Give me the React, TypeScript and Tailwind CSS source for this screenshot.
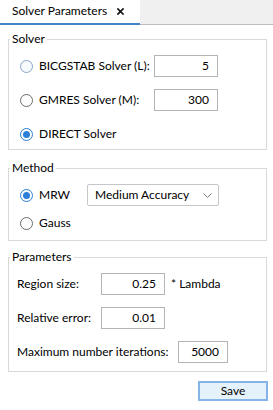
import React from "react";

function Radio({ state }: { state: "off" | "hover" | "on" }) {
  if (state === "on") {
    return (
      <span className="flex h-[13px] w-[13px] shrink-0 items-center justify-center rounded-full border border-[#2b7fd6] bg-white">
        <span className="h-[7px] w-[7px] rounded-full bg-[#2b7fd6]" />
      </span>
    );
  }
  if (state === "hover") {
    return <span className="h-[13px] w-[13px] shrink-0 rounded-full border border-[#8aa5c6] bg-[#f7fafd]" />;
  }
  return <span className="h-[13px] w-[13px] shrink-0 rounded-full border border-[#6b6b6b] bg-white" />;
}

function NumBox({ value, w }: { value: string; w: string }) {
  return (
    <div className={`flex h-[22px] shrink-0 items-center justify-end border border-[#b4b4b4] bg-white pr-[8px] ${w}`}>
      {value}
    </div>
  );
}

function Group({ title, children, className }: { title: string; children: React.ReactNode; className?: string }) {
  return (
    <fieldset className={`ml-[8px] w-[259px] border border-[#d9d9d9] p-0 ${className ?? ""}`}>
      <legend className="ml-[1px] px-[2px] leading-[16px]">{title}</legend>
      {children}
    </fieldset>
  );
}

export default function App() {
  return (
    <div
      className="h-[410px] w-[273px] whitespace-nowrap bg-white text-[12px] leading-[16px] text-black"
      style={{ fontFamily: 'Lato, "Noto Sans", sans-serif' }}
    >
      {/* Tab bar */}
      <div className="flex h-[25px]">
        <div className="flex h-[25px] w-[140px] items-center border-b-2 border-[#3f86cf] bg-white pb-[1px] pl-[12px]">
          <span className="w-[105px]">Solver Parameters</span>
          <svg width="7" height="7" viewBox="0 0 7 7">
            <path d="M1 1L6 6M6 1L1 6" stroke="#111" strokeWidth="1.7" strokeLinecap="square" />
          </svg>
        </div>
        <div className="h-[25px] flex-1 border-b border-[#bcbcbc] bg-[#f0f0f0]" />
      </div>

      <Group title="Solver" className="mt-[6px]">
        <div className="flex flex-col gap-[12px] pb-[4px] pl-[11px] pt-[8px]">
          <div className="flex h-[22px] items-center">
            <div className="flex w-[134px] items-center gap-[6px]">
              <Radio state="hover" />
              <span>BICGSTAB Solver (L):</span>
            </div>
            <NumBox value="5" w="w-[64px]" />
          </div>
          <div className="flex h-[22px] items-center">
            <div className="flex w-[134px] items-center gap-[6px]">
              <Radio state="off" />
              <span>GMRES Solver (M):</span>
            </div>
            <NumBox value="300" w="w-[64px]" />
          </div>
          <div className="flex h-[22px] items-center gap-[6px]">
            <Radio state="on" />
            <span>DIRECT Solver</span>
          </div>
        </div>
      </Group>

      <Group title="Method" className="mt-[10px]">
        <div className="flex flex-col gap-[6px] pb-[6px] pl-[11px] pt-[8px]">
          <div className="flex h-[22px] items-center">
            <div className="flex w-[67px] items-center gap-[6px]">
              <Radio state="on" />
              <span>MRW</span>
            </div>
            <div className="flex h-[22px] w-[132px] items-center justify-between rounded-[2px] border border-[#c6c6c6] bg-white pl-[7px] pr-[6px]">
              <span>Medium Accuracy</span>
              <svg width="9" height="5" viewBox="0 0 9 5">
                <path d="M0.5 0.5L4.5 4.5L8.5 0.5" fill="none" stroke="#777" strokeWidth="1" />
              </svg>
            </div>
          </div>
          <div className="flex h-[22px] items-center gap-[6px]">
            <Radio state="off" />
            <span>Gauss</span>
          </div>
        </div>
      </Group>

      <Group title="Parameters" className="mt-[8px]">
        <div className="flex flex-col gap-[12px] pb-[8px] pl-[8px] pt-[8px]">
          <div className="flex h-[22px] items-center">
            <span className="w-[84px]">Region size:</span>
            <NumBox value="0.25" w="w-[64px]" />
            <span className="ml-[6px]">* Lambda</span>
          </div>
          <div className="flex h-[22px] items-center">
            <span className="w-[84px]">Relative error:</span>
            <NumBox value="0.01" w="w-[64px]" />
          </div>
          <div className="flex h-[22px] items-center">
            <span className="w-[161px]">Maximum number iterations:</span>
            <NumBox value="5000" w="w-[50px]" />
          </div>
        </div>
      </Group>

      <div className="mt-[9px] flex justify-end pr-[5px]">
        <button className="flex h-[20px] w-[70px] items-center justify-center border-2 border-[#84b5e6] bg-[#e5f1fb]">
          Save
        </button>
      </div>
    </div>
  );
}
